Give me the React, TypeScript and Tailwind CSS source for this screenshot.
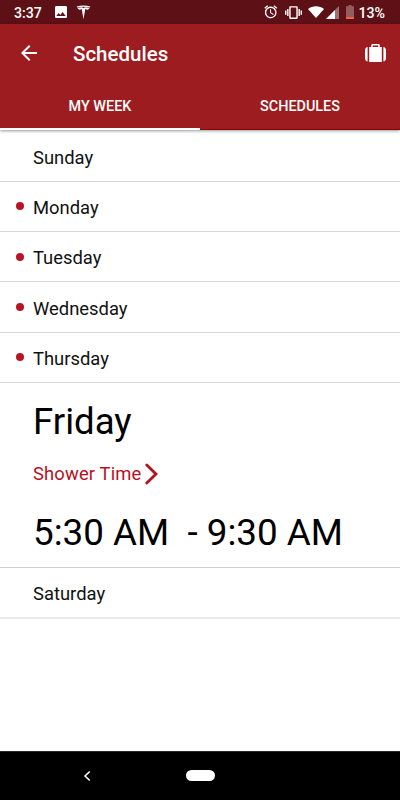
import { MdAlarm, MdArrowBack, MdImage, MdVibration } from 'react-icons/md';

type Day = {
  name: string;
  scheduled: boolean;
};

const weekDays: Day[] = [
  { name: 'Sunday', scheduled: false },
  { name: 'Monday', scheduled: true },
  { name: 'Tuesday', scheduled: true },
  { name: 'Wednesday', scheduled: true },
  { name: 'Thursday', scheduled: true },
];

function StatusBar() {
  return (
    <div className="flex h-6 items-center bg-[#5d1116] pl-3.5 pr-[15px] text-white">
      <span className="pt-px text-[14.2px] font-medium leading-6">3:37</span>
      <MdImage className="ml-[11px] h-4 w-4" />
      {/* Tesla */}
      <svg className="ml-[7px] h-[15px] w-[15px]" viewBox="0 0 15 15" fill="currentColor">
        <path d="M.7 1.4C4.9.2 10.1.2 14.3 1.4l-.5 1C10 1.4 5 1.4 1.2 2.4z" />
        <path d="M1.5 3.1C3 2.6 4.6 2.4 6.1 2.3l1.4.9 1.4-.9c1.5.1 3.1.3 4.6.8-.5 1.2-1.3 1.6-2.5 1.8-.5-.5-1-.7-1.7-.8L7.5 14.2 5.7 4.1c-.7.1-1.2.3-1.7.8-1.2-.2-2-.6-2.5-1.800z" />
      </svg>
      <div className="ml-auto flex items-center">
        <MdAlarm className="h-[15.5px] w-[15.5px]" />
        <MdVibration className="ml-[7px] h-[17px] w-[17px]" />
        <svg className="ml-1.5 h-3 w-4" viewBox="0 0 16 12" fill="currentColor">
          <path d="M0 3C4.6-.8 11.4-.8 16 3L8 12z" />
        </svg>
        <svg className="ml-0.5 mt-px h-[13px] w-[13px]" viewBox="0 0 13 13" fill="currentColor">
          <path d="M13 0v13H0z" fillOpacity=".4" />
          <path d="M9 4v9H0z" />
        </svg>
        <svg className="ml-[7px] h-[14px] w-2" viewBox="0 0 8 14">
          <path d="M2.5 0h3v1.3H8V14H0V1.3h2.5z" fill="#925b5e" />
          <path d="M0 12h8v2H0z" fill="#f0613c" />
        </svg>
        <span className="ml-1 pt-px text-[14.2px] font-medium leading-6">13%</span>
      </div>
    </div>
  );
}

function Header() {
  return (
    <header className="relative h-[106px] bg-[#9d1c20] text-white shadow-[0_1px_3px_rgba(0,0,0,0.4)]">
      <div className="flex h-[58px] items-center pl-[17px] pr-3.5">
        <MdArrowBack className="h-6 w-6" />
        <h1 className="ml-8 pt-px text-[20.5px] font-medium leading-6">Schedules</h1>
        <svg className="ml-auto h-[18px] w-[21px]" viewBox="0 0 21 18" fill="currentColor">
          <path d="M2.6 3v14.6C1.2 17.4 0 16.2 0 14.6V6c0-1.6 1.2-2.8 2.6-3zM18.4 3C19.8 3.2 21 4.4 21 6v8.6c0 1.6-1.2 2.8-2.6 3z" />
          <path d="M6.2 3V1.3C6.2.6 6.8 0 7.5 0h6c.7 0 1.3.6 1.3 1.3V3h2v15H4.2V3zm1.5 0h5.6V1.5H7.7z" />
        </svg>
      </div>
      <div className="flex h-12 text-[14.4px] font-medium leading-5">
        <div className="flex flex-1 items-center justify-center border-b-2 border-white pt-1">MY WEEK</div>
        <div className="flex flex-1 items-center justify-center border-b border-[#860000] pt-[3px]">SCHEDULES</div>
      </div>
    </header>
  );
}

function DayRow({ name, scheduled }: Day) {
  return (
    <li className="flex h-[50.3px] items-center border-b border-[#d8d8d8] pl-4 last:h-[51px] last:border-b-2 last:border-[#ebebeb]">
      <span className={`h-2 w-2 rounded-full ${scheduled ? 'bg-[#b81426]' : 'bg-transparent'}`} />
      <span className="ml-[9px] pt-[3px] text-[18.4px] leading-6 text-[#111111]">{name}</span>
    </li>
  );
}

function NavigationBar() {
  return (
    <nav className="flex h-[49px] items-center border-t border-[#2b2b2b] bg-black pl-[83px] text-white">
      <svg className="h-3 w-2" viewBox="0 0 8 12" fill="none" stroke="currentColor" strokeWidth="1.6">
        <path d="M6.8 1.5 2 6l4.8 4.5" />
      </svg>
      <div className="-mt-px ml-[95px] h-[11px] w-[29px] rounded-full bg-white" />
    </nav>
  );
}

export default function App() {
  return (
    <div className="flex h-[800px] w-[400px] flex-col overflow-hidden bg-white font-['Roboto',sans-serif] text-black">
      <StatusBar />
      <Header />
      <main className="flex-1 pt-[1.5px]">
        <ul>
          {weekDays.map((day) => (
            <DayRow key={day.name} {...day} />
          ))}
          {/* Today, expanded */}
          <li className="h-[185px] border-b border-[#d0d0d0] pl-[33px] pt-[18px]">
            <h2 className="text-[36.6px] leading-[42px]">Friday</h2>
            <div className="mt-[19px] flex items-center text-[#b5121f]">
              <span className="text-[18.4px] leading-6 tracking-[0.15px]">Shower Time</span>
              <svg className="ml-[3px] mt-px h-[22px] w-[13px]" viewBox="0 0 13 22" fill="none" stroke="currentColor" strokeWidth="2.8" strokeLinecap="round">
                <path d="M1.8 2 11 11l-9.2 9" />
              </svg>
            </div>
            <p className="mt-[26px] whitespace-pre text-[36.8px] leading-[42px]">5:30 AM  - 9:30 AM</p>
          </li>
          <DayRow name="Saturday" scheduled={false} />
        </ul>
      </main>
      <NavigationBar />
    </div>
  );
}
